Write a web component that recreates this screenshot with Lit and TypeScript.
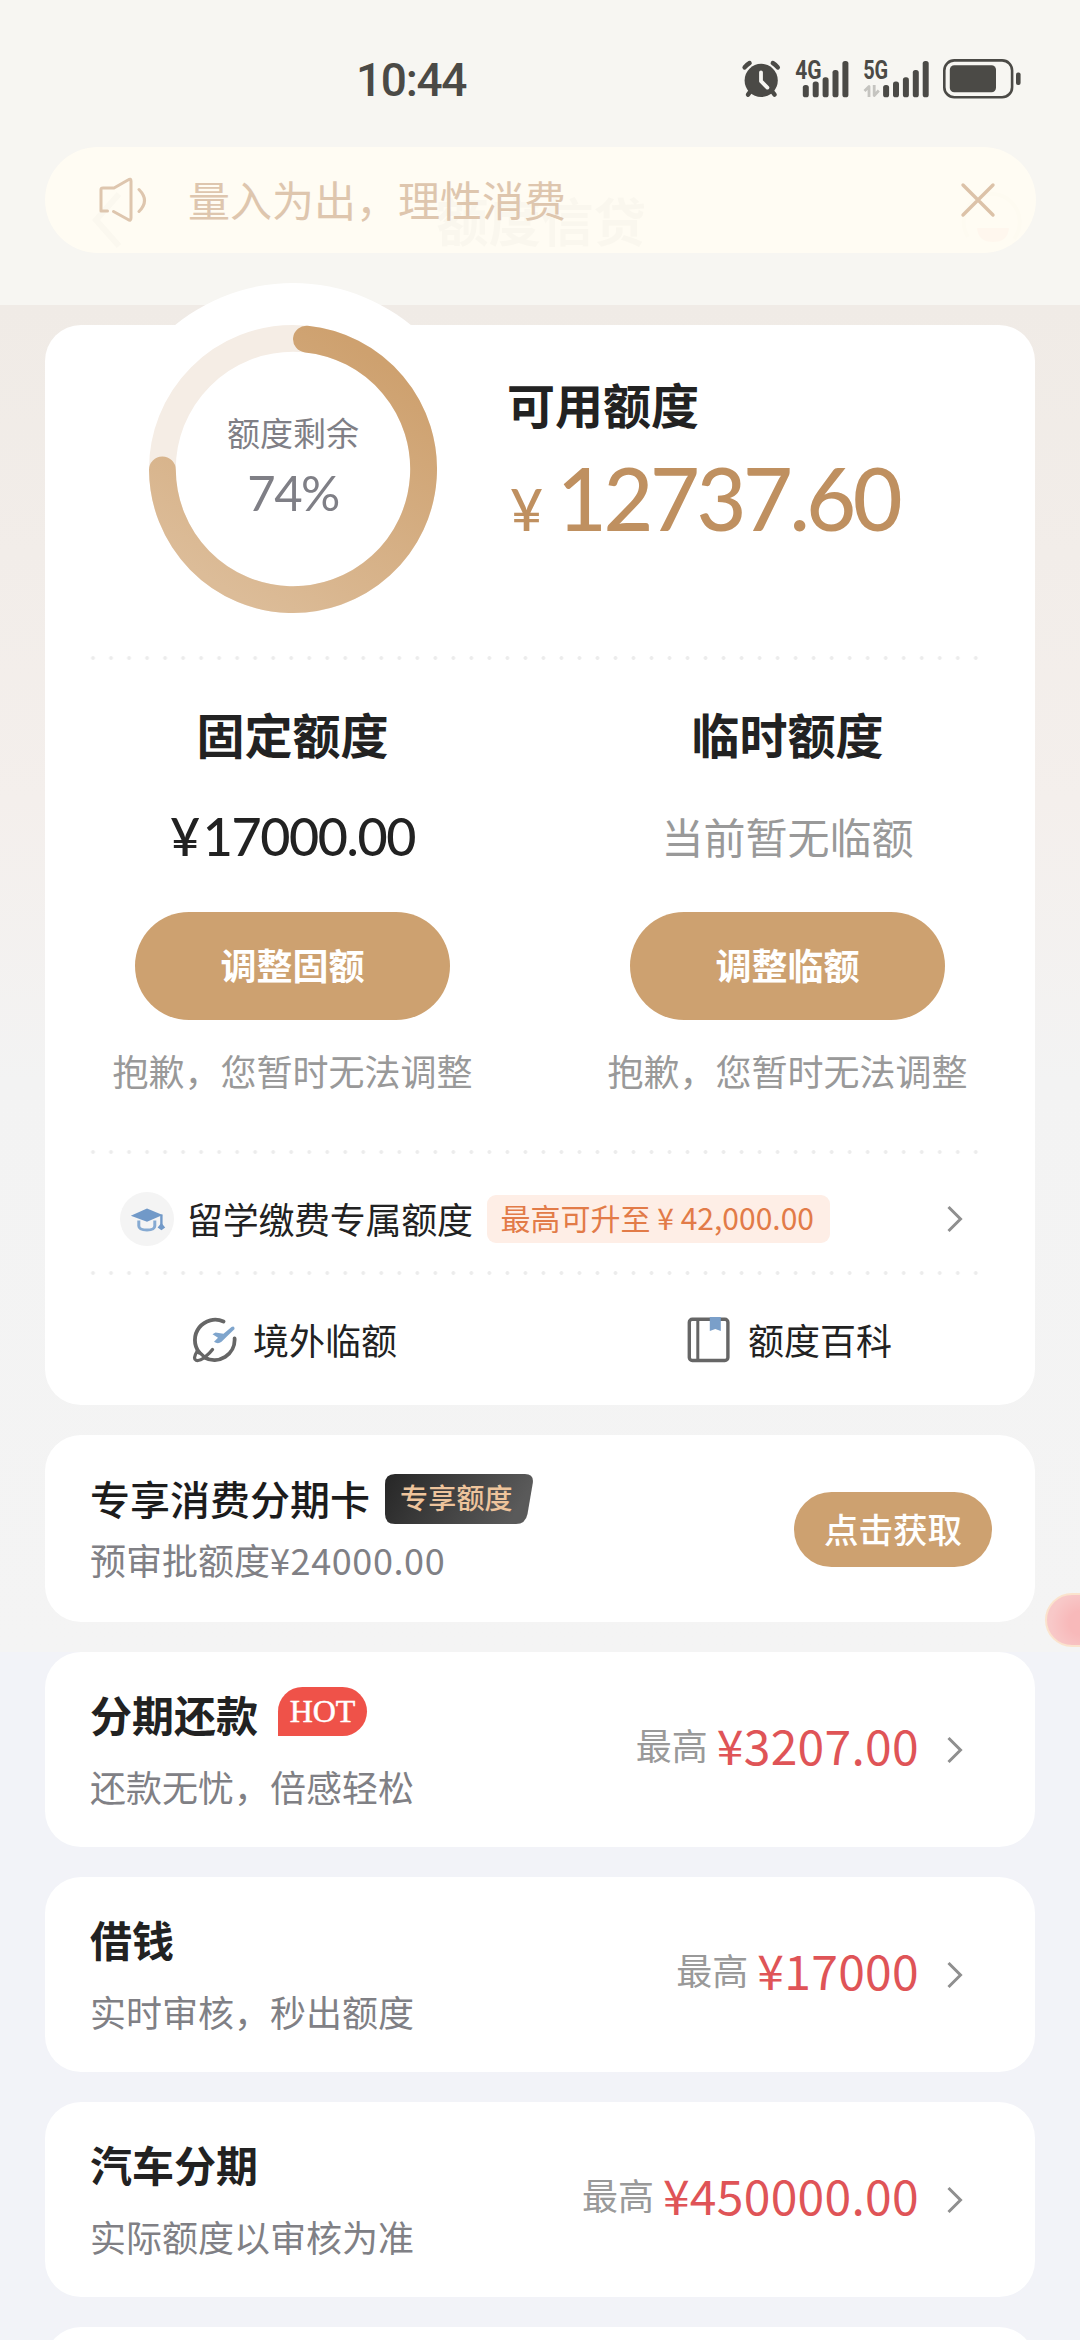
import { LitElement, html, css, svg, nothing } from "lit";
import { customElement, property } from "lit/decorators.js";

interface Offer {
  title: string;
  note: string;
  amount: string;
  hot?: boolean;
}

const OFFERS: Offer[] = [
  { title: "分期还款", note: "还款无忧，倍感轻松", amount: "¥3207.00", hot: true },
  { title: "借钱", note: "实时审核，秒出额度", amount: "¥17000" },
  { title: "汽车分期", note: "实际额度以审核为准", amount: "¥450000.00" },
];

const chevron = html`<svg width="18" height="30" viewBox="0 0 18 30" fill="none" stroke="#8f8f8f" stroke-width="3">
  <path d="M3.500 3 L15.5 15 L3.500 27" />
</svg>`;

@customElement("status-bar")
export class StatusBar extends LitElement {
  static styles = css`
    :host {
      display: flex;
      height: 147px;
      box-sizing: border-box;
      padding: 55px 59px 0 356px;
      justify-content: space-between;
      align-items: flex-start;
      color: #4b4a46;
    }
    .time {
      font: 500 46px/50px Roboto, sans-serif;
      letter-spacing: -1.3px;
    }
    .icons {
      display: block;
    }
    .net {
      font: 700 25px Roboto, sans-serif;
    }
  `;

  private bars(x: number) {
    const tops = [85, 81.5, 77.3, 70, 61];
    return tops.map((t, i) => svg`<rect x=${x + i * 9.9} y=${t} width="6" height=${97.3 - t} rx="2.6"/>`);
  }

  render() {
    return html`
      <span class="time">10:44</span>
      <svg class="icons" width="281" height="50" viewBox="740 55 281 50" fill="#4b4a46">
        <circle cx="761.2" cy="80.4" r="16.6" />
        <g stroke="#4b4a46" stroke-width="4.4" stroke-linecap="round" fill="none">
          <path d="M744.6 67.4 Q746.8 64.6 749.6 63" />
          <path d="M777.8 67.4 Q775.6 64.6 772.8 63" />
          <path d="M751 90.5 L748 94.6" />
          <path d="M771.4 90.5 L774.6 94.6" />
        </g>
        <path d="M761 72.3 V81.2 L767.4 87.6" stroke="#f7f6f2" stroke-width="3.8" stroke-linecap="round" stroke-linejoin="round" fill="none" />
        <text class="net" x="795.2" y="79.4" textLength="26.4" lengthAdjust="spacingAndGlyphs">4G</text>
        ${this.bars(802.8)}
        <text class="net" x="863.2" y="79.4" textLength="25" lengthAdjust="spacingAndGlyphs">5G</text>
        ${this.bars(883.1)}
        <g stroke="#c5c4c0" stroke-width="2.8" fill="none" stroke-linejoin="round">
          <path d="M864.5 91 L869 86.5 V97" />
          <path d="M878.8 90.5 L874.2 95.5 V85" />
        </g>
        <rect x="944.3" y="60.4" width="67.8" height="36.8" rx="10" fill="none" stroke="#4b4a46" stroke-width="2.6" />
        <rect x="949.8" y="65.3" width="46.2" height="27" rx="4.5" />
        <rect x="1016" y="72.6" width="4.6" height="12.4" rx="2" />
      </svg>
    `;
  }
}

@customElement("notice-bar")
export class NoticeBar extends LitElement {
  static styles = css`
    :host {
      display: block;
      position: relative;
      height: 158px;
    }
    .nav {
      display: flex;
      justify-content: space-between;
      height: 106px;
      box-sizing: border-box;
      padding: 44px 53px 0 92px;
    }
    .nav-title {
      font: 700 52.5px/62px "Noto Sans CJK SC", sans-serif;
      color: #444;
      margin-top: -3px;
      margin-left: 1px;
    }
    .notice {
      position: absolute;
      left: 45px;
      top: 0;
      width: 991px;
      height: 106px;
      box-sizing: border-box;
      padding: 0 40px 0 54px;
      border-radius: 53px;
      background: rgba(255, 252, 243, 0.975);
      display: flex;
      align-items: center;
    }
    .text {
      flex: 1;
      margin-left: 39px;
      font: 400 42px/60px "Noto Sans CJK SC", sans-serif;
      color: #dec6ae;
      margin-top: -3px;
    }
  `;

  render() {
    return html`
      <div class="nav">
        <svg width="30" height="58" viewBox="0 0 30 58" fill="none" stroke="#555" stroke-width="6">
          <path d="M27 3 L4 29 L27 55" />
        </svg>
        <span class="nav-title">额度信贷</span>
        <svg width="68" height="62" viewBox="0 0 68 62">
          <path d="M9 46 A28 28 0 1 1 55 48" fill="none" stroke="#cba" stroke-width="4" />
          <path d="M18 37 H50 Q49 51 34 51 Q19 51 18 37Z" fill="#d44" />
        </svg>
      </div>
      <div class="notice">
        <svg width="50" height="48" viewBox="97 177 50 48" fill="none" stroke="#dec6ae" stroke-width="3" stroke-linejoin="round" stroke-linecap="round">
          <path d="M105.500 212 H99 V190.5 Q99 189 101 189 H112 L126 181 Q129 179 129 182 V219 Q129 222.500 126 220.5 L111.500 212.5" />
          <path d="M137 190.5 Q148 201.500 137 212.5" />
        </svg>
        <span class="text">量入为出，理性消费</span>
        <svg width="36" height="36" viewBox="0 0 36 36" fill="none" stroke="#dcc2a8" stroke-width="3.4" stroke-linecap="round">
          <path d="M3 3 L33 33 M33 3 L3 33" />
        </svg>
      </div>
    `;
  }
}

@customElement("quota-ring")
export class QuotaRing extends LitElement {
  @property({ type: Number }) percent = 0;

  static styles = css`
    :host {
      display: grid;
      width: 288px;
      height: 288px;
    }
    .ring,
    .label {
      grid-area: 1 / 1;
    }
    .label {
      display: flex;
      flex-direction: column;
      align-items: center;
      color: #7f7f86;
    }
    .caption {
      margin-top: 82px;
      font: 400 33px/50px "Noto Sans CJK SC", sans-serif;
    }
    .value {
      margin-top: 5px;
      font: 400 49px/60px Lato, sans-serif;
      letter-spacing: -1.6px;
    }
  `;

  render() {
    const r = 130.6;
    const point = (deg: number) => {
      const a = (deg * Math.PI) / 180;
      return `${(144 + r * Math.sin(a)).toFixed(2)} ${(144 - r * Math.cos(a)).toFixed(2)}`;
    };
    const end = this.percent * 3.6 + 3.2;
    return html`
      <svg class="ring" width="288" height="288" viewBox="0 0 288 288" fill="none" stroke-width="26.8">
        <defs>
          <linearGradient id="g" gradientUnits="userSpaceOnUse" x1="190" y1="10" x2="40" y2="240">
            <stop offset="0" stop-color="#cea16f" />
            <stop offset="1" stop-color="#dcbc98" />
          </linearGradient>
        </defs>
        <circle cx="144" cy="144" r=${r} stroke="#f5ede5" />
        <path d="M${point(5.9)} A${r} ${r} 0 1 1 ${point(end)}" stroke="url(#g)" stroke-linecap="round" />
      </svg>
      <div class="label">
        <span class="caption">额度剩余</span>
        <span class="value">${this.percent}%</span>
      </div>
    `;
  }
}

@customElement("quota-card")
export class QuotaCard extends LitElement {
  static styles = css`
    :host {
      display: flex;
      flex-direction: column;
      position: relative;
      height: 1080px;
      border-radius: 36px;
      background: #fff;
      color: #222;
      font-family: "Noto Sans CJK SC", sans-serif;
    }
    .halo {
      position: absolute;
      left: 62px;
      top: -42px;
      width: 372px;
      height: 372px;
      border-radius: 50%;
      background: #fff;
    }
    .overview {
      position: relative;
      display: flex;
      height: 331px;
      padding-left: 104px;
    }
    .available {
      margin-left: 70px;
      padding-top: 48px;
    }
    .heading {
      font-size: 48px;
      line-height: 60px;
      font-weight: 700;
    }
    .sum {
      margin-top: 15px;
      display: flex;
      align-items: baseline;
      font: 500 86px/100px Lato, sans-serif;
      color: #bf9060;
      letter-spacing: -3.4px;
      white-space: nowrap;
    }
    .yen {
      font-size: 57px;
      width: 47px;
      margin-left: 3px;
    }
    .dots {
      height: 4px;
      margin: 0 49px 0 39px;
      background: radial-gradient(circle at center, #ececec 1.5px, transparent 2.3px) 0 0 / 18.03px 4px;
    }
    .columns {
      display: grid;
      grid-template-columns: 1fr 1fr;
      height: 490px;
    }
    .column {
      display: flex;
      flex-direction: column;
      align-items: center;
      padding-top: 43px;
    }
    .money {
      margin-top: 43px;
      font: 500 52px/60px Lato, sans-serif;
      letter-spacing: -1.4px;
    }
    .money-sign {
      margin-right: 4px;
    }
    .none {
      margin-top: 43px;
      font-size: 42px;
      line-height: 60px;
      color: #999;
    }
    .button {
      margin-top: 46px;
      width: 315px;
      height: 108px;
      border-radius: 54px;
      background: #cda170;
      color: #fff;
      font-size: 36px;
      font-weight: 700;
      line-height: 105px;
      text-align: center;
    }
    .sorry {
      margin-top: 25px;
      font-size: 36px;
      line-height: 50px;
      color: #999;
    }
    .study {
      display: flex;
      align-items: center;
      height: 117px;
      padding: 8px 72px 0 75px;
      box-sizing: border-box;
      font-size: 36px;
      line-height: 50px;
    }
    .study-icon {
      width: 54px;
      height: 54px;
      border-radius: 50%;
      background: #f4f4f4;
      margin-top: 5px;
    }
    .study-name {
      margin: 2px 0 0 13px;
      white-space: nowrap;
      letter-spacing: -0.3px;
    }
    .tag {
      margin: 5px auto 0 14px;
      width: 343px;
      height: 48px;
      box-sizing: border-box;
      padding-left: 14px;
      border-radius: 9px;
      background: #feeee6;
      color: #e27b48;
      font-size: 30px;
      line-height: 44px;
      white-space: nowrap;
    }
    .study-arrow {
      display: flex;
      margin-top: 4px;
    }
    .links {
      display: grid;
      grid-template-columns: 1fr 1fr;
      height: 130px;
      font-size: 36px;
      line-height: 50px;
    }
    .link {
      display: flex;
      align-items: center;
      padding: 0 0 2px 146px;
    }
    .link-icon {
      margin-top: 1px;
    }
    .link-name {
      margin: 0 0 0 16px;
    }
  `;

  render() {
    return html`
      <div class="halo"></div>
      <div class="overview">
        <quota-ring percent="74"></quota-ring>
        <div class="available">
          <div class="heading">可用额度</div>
          <div class="sum"><span class="yen">¥</span>12737.60</div>
        </div>
      </div>
      <div class="dots"></div>
      <div class="columns">
        <div class="column">
          <div class="heading">固定额度</div>
          <div class="money"><span class="money-sign">¥</span>17000.00</div>
          <div class="button">调整固额</div>
          <div class="sorry">抱歉，您暂时无法调整</div>
        </div>
        <div class="column">
          <div class="heading">临时额度</div>
          <div class="none">当前暂无临额</div>
          <div class="button">调整临额</div>
          <div class="sorry">抱歉，您暂时无法调整</div>
        </div>
      </div>
      <div class="dots"></div>
      <div class="study">
        <svg class="study-icon" viewBox="120 1192 54 54" fill="none">
          <path d="M130.8 1215.8 L147 1208.6 L162.6 1215 L147 1221.8Z" fill="#7199c8" />
          <path d="M138.800 1220.500 V1226 Q139 1230 147 1230 Q154.600 1230 154.800 1226 V1220.500" stroke="#86aad2" stroke-width="3" />
          <path d="M161.400 1214.500 V1226" stroke="#7199c8" stroke-width="2.4" />
          <path d="M161.400 1223 L165.200 1227.500 L161.400 1230.300 L157.600 1227.500Z" fill="#7199c8" />
        </svg>
        <span class="study-name">留学缴费专属额度</span>
        <span class="tag">最高可升至 ¥ 42,000.00</span>
        <span class="study-arrow">${chevron}</span>
      </div>
      <div class="dots"></div>
      <div class="links">
        <div class="link">
          <svg class="link-icon" width="46" height="46" viewBox="190 1317 46 46" fill="none">
            <path d="M222.500 1321.500 A20.300 20.300 0 0 0 198.200 1352.500 M233.600 1338.500 A20.300 20.300 0 0 1 203.500 1357.500" stroke="#666" stroke-width="3.8" stroke-linecap="round" />
            <path d="M196.500 1350.500 Q191.500 1359 195 1360.300 Q198 1361.500 204 1357 Q209 1353 211.500 1349.500 M196.500 1350.500 L204 1357.500" stroke="#666" stroke-width="3.200" stroke-linecap="round" stroke-linejoin="round" />
            <path d="M211.500 1334.200 L214.500 1332.600 L222.500 1333.800 L230.500 1327 Q233.500 1325.500 233.600 1329 L220.500 1341.800 Q217 1344.500 213 1341.800 L217 1337.800Z" fill="#7fa5cd" />
          </svg>
          <span class="link-name">境外临额</span>
        </div>
        <div class="link">
          <svg class="link-icon" width="46" height="46" viewBox="686 1317 46 46" fill="none">
            <rect x="689.300" y="1319.300" width="38.600" height="41.200" rx="3" stroke="#666" stroke-width="3.400" />
            <path d="M697.800 1319 V1361" stroke="#666" stroke-width="3" />
            <path d="M709.800 1317 H720.800 V1331 L715.300 1329 L709.800 1331Z" fill="#7a9fc9" />
          </svg>
          <span class="link-name">额度百科</span>
        </div>
      </div>
    `;
  }
}

@customElement("offer-card")
export class OfferCard extends LitElement {
  @property({ attribute: false }) offer!: Offer;

  static styles = css`
    :host {
      display: flex;
      height: 195px;
      box-sizing: border-box;
      align-items: center;
      padding: 0 72px 0 45px;
      border-radius: 36px;
      background: #fff;
      font-family: "Noto Sans CJK SC", sans-serif;
    }
    .info {
      flex: 1;
      align-self: flex-start;
      padding-top: 32px;
    }
    .title-row {
      display: flex;
      align-items: flex-start;
      font-size: 42px;
      line-height: 60px;
      font-weight: 700;
      color: #222;
    }
    .hot {
      margin: 3px 0 0 20px;
      width: 89px;
      height: 49px;
      border-radius: 24.5px 24.5px 24.5px 0;
      background: #ef5249;
      color: #fff;
      text-align: center;
      font: 400 32px/48px "Liberation Serif", serif;
      -webkit-text-stroke: 0.5px #fff;
    }
    .note {
      margin-top: 17px;
      font-size: 36px;
      line-height: 50px;
      color: #808085;
    }
    .price {
      display: flex;
      align-items: center;
      margin-bottom: 12px;
    }
    .most {
      font-size: 36px;
      line-height: 50px;
      color: #999;
      margin-top: 1px;
    }
    .amount {
      margin-left: 9px;
      font-size: 48px;
      line-height: 60px;
      color: #df5457;
      letter-spacing: 0.3px;
    }
    .arrow {
      display: flex;
      margin-left: 26px;
    }
  `;

  render() {
    const { title, note, amount, hot } = this.offer;
    return html`
      <div class="info">
        <div class="title-row">
          <span>${title}</span>
          ${hot ? html`<span class="hot">HOT</span>` : nothing}
        </div>
        <div class="note">${note}</div>
      </div>
      <div class="price">
        <span class="most">最高</span>
        <span class="amount">${amount}</span>
      </div>
      <span class="arrow">${chevron}</span>
    `;
  }
}

@customElement("app-root")
export class AppRoot extends LitElement {
  static styles = css`
    :host {
      display: block;
      position: relative;
      width: 1080px;
      height: 2340px;
      overflow: hidden;
      background: linear-gradient(#f0ebe6 305px, #f4efec 800px, #f3f3f3 1080px, #f4f4f4 1652px, #f2f3f8 1652px);
      font-family: "Noto Sans CJK SC", sans-serif;
    }
    .header {
      height: 305px;
      background: #f7f6f2;
    }
    .content {
      display: flex;
      flex-direction: column;
      gap: 30px;
      padding: 20px 45px 0;
    }
    .exclusive {
      display: flex;
      height: 187px;
      box-sizing: border-box;
      align-items: center;
      justify-content: space-between;
      padding: 0 43px 0 45px;
      border-radius: 36px;
      background: #fff;
    }
    .info {
      align-self: flex-start;
      padding-top: 33px;
    }
    .title-row {
      display: flex;
      align-items: flex-start;
      font-size: 40px;
      line-height: 60px;
      font-weight: 500;
      color: #1c1c1c;
    }
    .badge {
      display: grid;
      margin: 6px 0 0 15px;
    }
    .badge-shape,
    .badge-text {
      grid-area: 1 / 1;
    }
    .badge-text {
      padding-left: 15px;
      font-size: 28px;
      line-height: 47px;
      letter-spacing: 0.2px;
      color: #eec49c;
    }
    .note {
      margin-top: 6px;
      font-size: 36px;
      line-height: 50px;
      color: #808085;
    }
    .figures {
      letter-spacing: 0.6px;
    }
    .get {
      width: 198px;
      height: 75px;
      margin-top: 2px;
      border-radius: 38px;
      background: #cda170;
      color: #fff;
      font-size: 34.5px;
      font-weight: 500;
      line-height: 72px;
      text-align: center;
    }
    .sheet {
      height: 195px;
      border-radius: 36px;
      background: #fff;
      flex: none;
    }
    .float {
      position: absolute;
      left: 1045px;
      top: 1593px;
      width: 80px;
      height: 54px;
      box-sizing: border-box;
      border-radius: 27px;
      border: 2px solid #fbe3cd;
      background: radial-gradient(circle at 34px 28px, #f8b9ba 12px, #f8c8c8 30px);
    }
  `;

  render() {
    return html`
      <div class="header">
        <status-bar></status-bar>
        <notice-bar></notice-bar>
      </div>
      <div class="content">
        <quota-card></quota-card>
        <div class="exclusive">
          <div class="info">
            <div class="title-row">
              <span>专享消费分期卡</span>
              <span class="badge">
                <svg class="badge-shape" width="148" height="50" viewBox="0 0 148 50">
                  <defs>
                    <linearGradient id="b" x1="0" y1="0" x2="1" y2="0.2">
                      <stop offset="0" stop-color="#262626" />
                      <stop offset="1" stop-color="#5a5a5a" />
                    </linearGradient>
                  </defs>
                  <path d="M10 0 H140 Q149 0 147.800 9 L142.500 40 Q140.500 50 131 50 H10 Q0 50 0 40 V10 Q0 0 10 0Z" fill="url(#b)" />
                </svg>
                <span class="badge-text">专享额度</span>
              </span>
            </div>
            <div class="note">预审批额度<span class="figures">¥24000.00</span></div>
          </div>
          <div class="get">点击获取</div>
        </div>
        ${OFFERS.map((offer) => html`<offer-card .offer=${offer}></offer-card>`)}
        <div class="sheet"></div>
      </div>
      <div class="float"></div>
    `;
  }
}
